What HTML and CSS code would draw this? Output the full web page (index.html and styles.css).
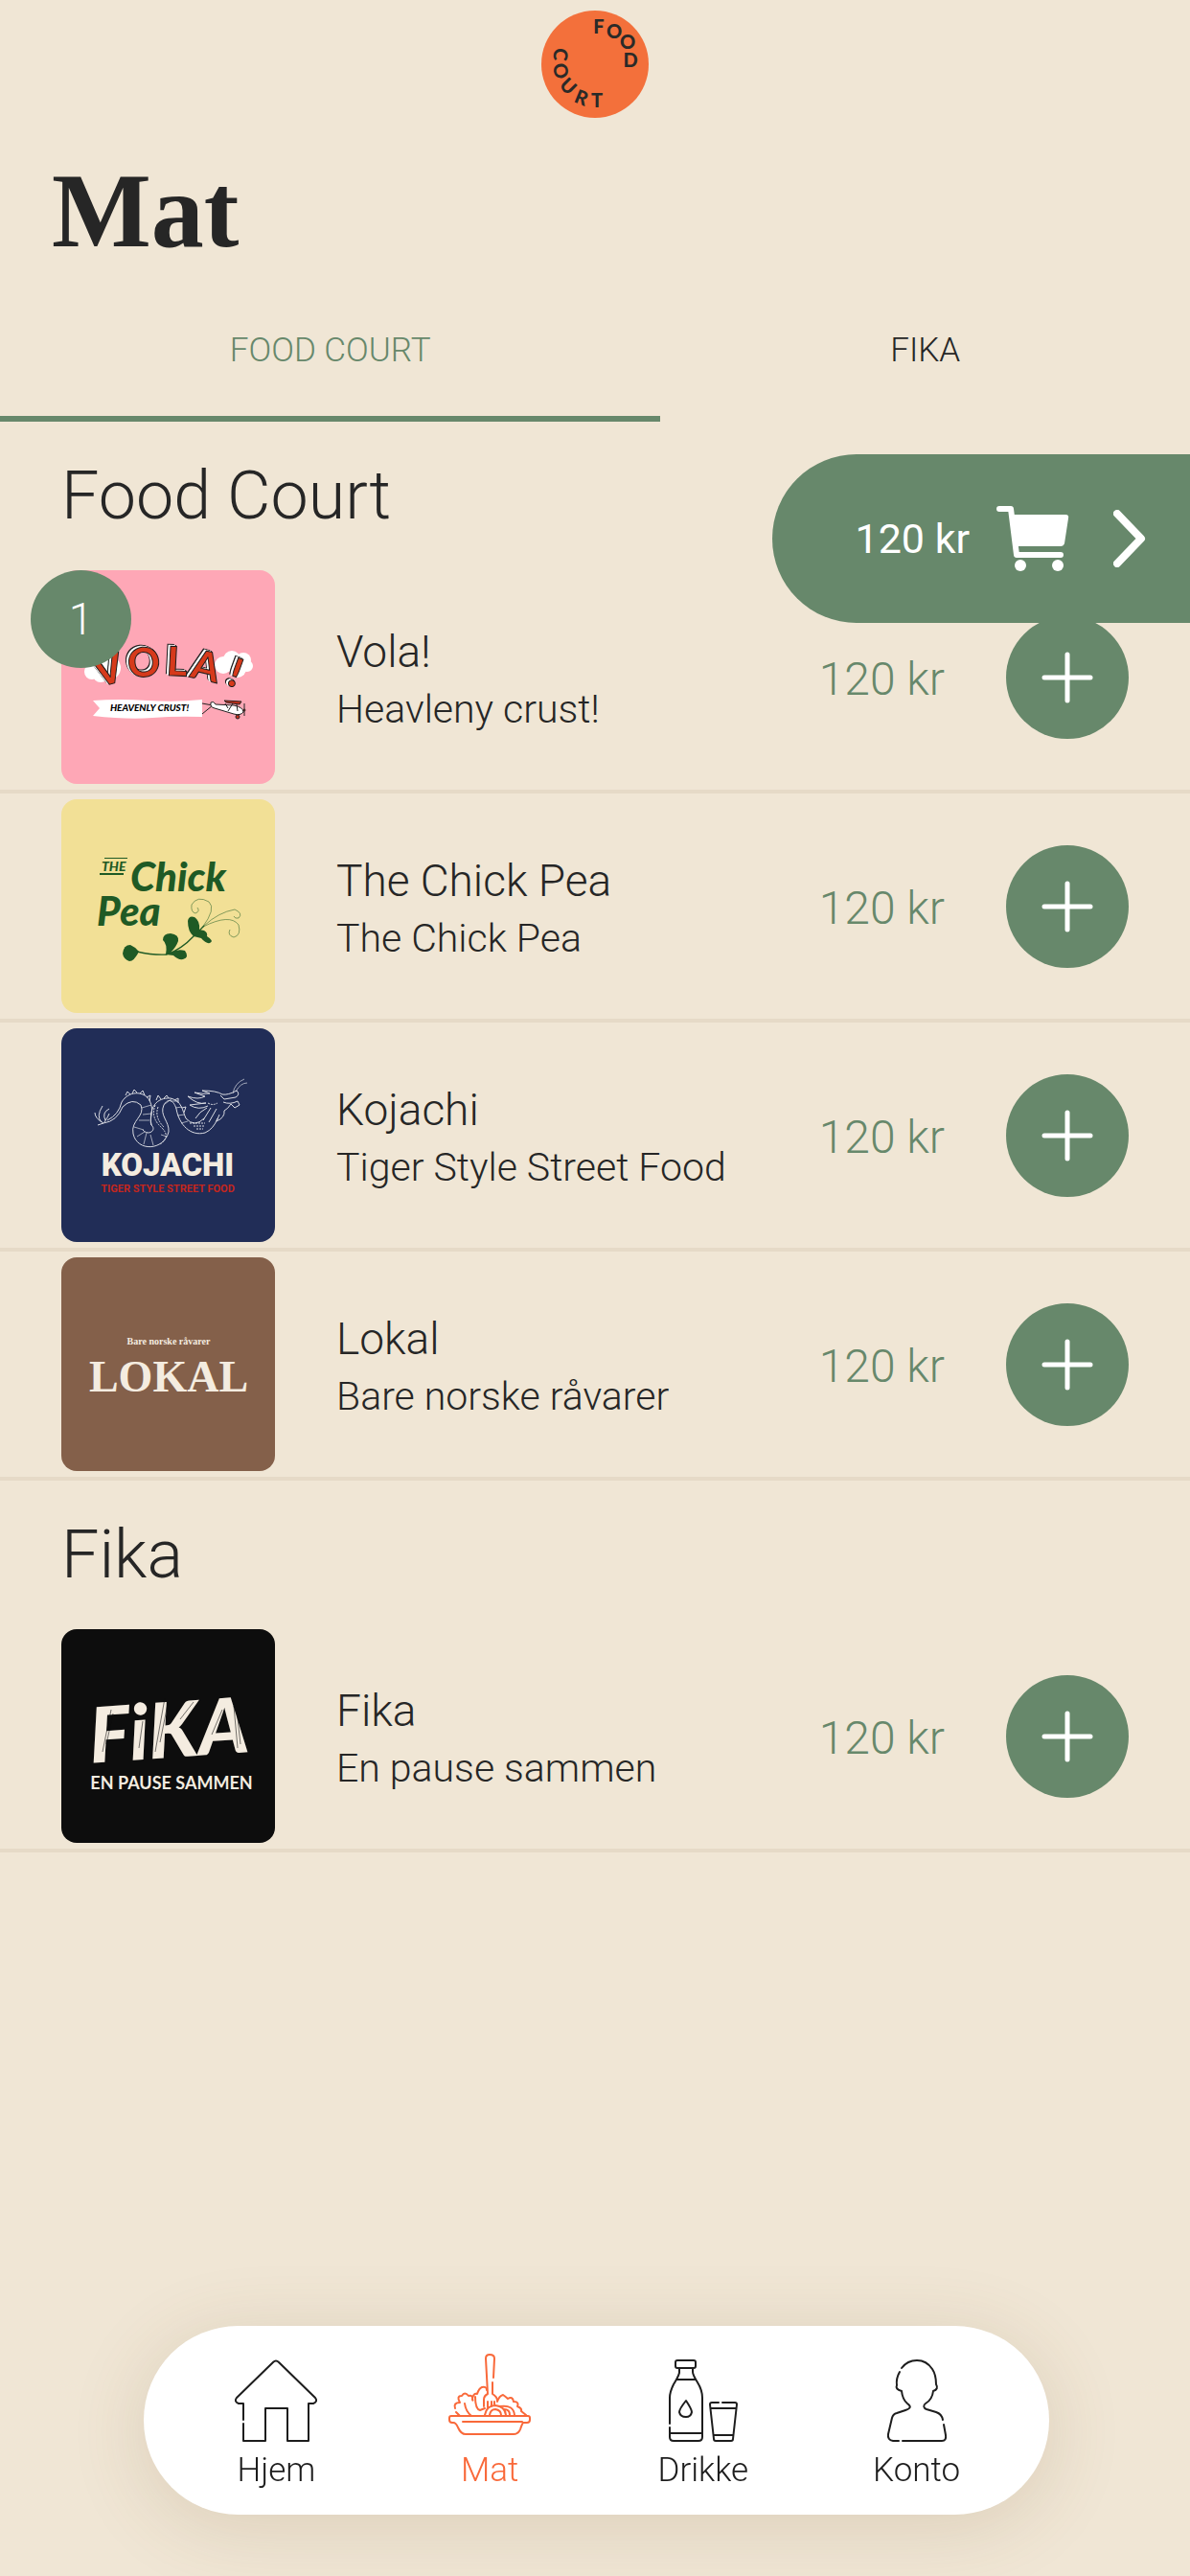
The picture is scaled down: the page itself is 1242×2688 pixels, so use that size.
FILE: index.html
```html
<!DOCTYPE html>
<html lang="no">
<head>
  <meta charset="UTF-8">
  <meta name="viewport" content="width=device-width, initial-scale=1.0">
  <title>Food Court - Mat</title>
  <link rel="stylesheet" href="styles.css">
</head>
<body>
  <header class="header">
    <svg class="logo" viewBox="0 0 112 112" role="img" aria-label="Food Court">
      <circle cx="56" cy="56" r="56" fill="#f3703b"/>
      <g class="logo-letters">
        <text x="60" y="24">F</text>
        <text x="76" y="29">O</text>
        <text x="90" y="40">O</text>
        <text x="93" y="59">D</text>
        <text transform="translate(20 46) rotate(95)" y="7">C</text>
        <text transform="translate(20 63) rotate(75)" y="7">O</text>
        <text transform="translate(28 79) rotate(45)" y="7">U</text>
        <text transform="translate(42 91) rotate(22)" y="7">R</text>
        <text x="58" y="101">T</text>
      </g>
    </svg>
  </header>

  <main>
    <h1>Mat</h1>
    <div class="tabs" role="tablist">
      <button class="tab active" role="tab" aria-selected="true">FOOD COURT</button>
      <button class="tab" role="tab" aria-selected="false">FIKA</button>
    </div>

    <!-- Food Court -->
    <section>
      <h2>Food Court</h2>
      <ul class="menu">
        <li class="menu-item">
          <div class="thumb">
            <span class="badge">1</span>
            <svg class="picture vola" viewBox="0 0 223 223">
              <g fill="#fff">
                <circle cx="32" cy="106" r="8"/><circle cx="41" cy="109" r="8"/><circle cx="50" cy="102" r="12"/>
                <circle cx="169" cy="99" r="9"/><circle cx="178" cy="93" r="9"/><circle cx="190" cy="94" r="8"/><circle cx="194" cy="100" r="6"/><circle cx="184" cy="103" r="9"/>
                <path d="M33 136 Q60 134 90 136 T147 135 V153 Q120 152 95 154 T33 152 L40 144 Z"/>
              </g>
              <g class="vola-letters">
                <text transform="translate(49 104) rotate(-15)" y="15">V</text>
                <text transform="translate(86 96) rotate(-6)" y="15">O</text>
                <text transform="translate(121 95) rotate(3)" y="15">L</text>
                <text transform="translate(151 100) rotate(13)" y="15">A</text>
                <text transform="translate(182 107) rotate(20)" y="15">!</text>
              </g>
              <text class="vola-banner" x="92" y="147">HEAVENLY CRUST!</text>
              <!-- plane -->
              <g fill="#fff" stroke="#222" stroke-width="1">
                <path d="M147 139 L158 141 L147 150" fill="none"/>
                <path d="M156 138 Q159 136 161 140 L180 141 Q190 143 190 148 Q187 152 180 150 L160 144 Q155 143 156 138 Z"/>
                <path d="M174 147 L179 139 M183 140 L184 147 M171 139 L174 144" fill="none"/>
                <path d="M170 136 L188 137 L186 140 L172 138 Z" fill="#c8301a"/>
                <path d="M191 139 V152"/>
                <circle cx="191" cy="146" r="1" fill="#c8301a"/>
                <circle cx="184" cy="153" r="2" fill="#c8301a"/>
              </g>
            </svg>
          </div>
          <div class="info">
            <h3>Vola!</h3>
            <p>Heavleny crust!</p>
          </div>
          <span class="price">120 kr</span>
          <button class="add" aria-label="Legg til Vola!">
            <svg viewBox="0 0 54 54"><path d="M27 3V51M3 27H51"/></svg>
          </button>
        </li>
        <li class="menu-item">
          <div class="thumb">
            <svg class="picture chickpea" viewBox="0 0 223 223">
              <g fill="#1f5a25">
                <text class="chick-the" x="42" y="75">THE</text>
                <text class="chick-name" x="72" y="96">Chick</text>
                <text class="chick-name" x="37" y="132">Pea</text>
                <path d="M45 61 H69 V62 H45 Z M40 77 H65 V79 H40 Z"/>
                <path d="M64 161 Q65 152 72 152 Q77 154 81 159 Q76 169 71 169 Q65 167 64 161 Z"/>
                <path d="M109 162 Q111 151 106 147 Q106 140 114 140 Q123 141 122 148 Q120 154 114 160 Q121 156 129 158 Q134 165 127 167 Q122 168 117 163 Z"/>
                <path d="M138 143 Q132 138 132 127 Q133 121 139 123 Q145 127 144 136 L149 137 Q153 139 152 143 Q160 148 155 150 Q151 151 146 145 Z"/>
              </g>
              <g fill="none" stroke="#1f5a25">
                <path d="M79 159 Q97 163 110 162 Q126 156 138 143 L149 132" stroke-width="1.3"/>
                <path d="M147 134 Q162 114 154 107 Q142 100 136 110 Q135 118 140 119 Q145 117 142 113 M149 132 Q164 118 181 115 Q190 119 185 124 Q181 125 180 122 M148 133 Q176 119 185 131 Q188 142 180 144 Q173 142 176 136" stroke-width=".8" opacity=".65"/>
              </g>
            </svg>
          </div>
          <div class="info">
            <h3>The Chick Pea</h3>
            <p>The Chick Pea</p>
          </div>
          <span class="price">120 kr</span>
          <button class="add" aria-label="Legg til The Chick Pea">
            <svg viewBox="0 0 54 54"><path d="M27 3V51M3 27H51"/></svg>
          </button>
        </li>
        <li class="menu-item">
          <div class="thumb">
            <svg class="picture kojachi" viewBox="0 0 223 223">
              <!-- dragon -->
              <g fill="none" stroke="#d9dbe2" stroke-width="1">
                <path d="M44 99 Q58 97 64 82 Q74 72 83 80 C88 92 72 96 75 110 C79 129 107 128 112 108 C113 97 102 91 107 80 C111 73 117 74 120 84 C123 101 135 113 150 109 Q159 105 163 94"/>
                <path d="M48 96 Q60 90 63 77 C70 65 86 65 92 75 C98 87 91 94 94 101 C100 106 91 113 85 106"/>
                <path d="M94 101 C91 83 99 72 114 73 C126 76 126 85 130 94 Q139 104 149 94"/>
                <path d="M98 80 Q93 93 104 103 T103 121 M101 82 Q97 93 107 103" stroke-dasharray="2 1"/>
                <path d="M76 103 L86 106 M79 113 L87 108 M86 121 L89 109 M96 122 L93 111 M84 83 L94 80 M85 90 L94 89 M81 96 L92 96 M108 79 L116 73 M114 76 L122 76 M119 83 L126 82 M121 91 L129 90 M125 99 L132 97 M104 111 L110 113" stroke-width=".7"/>
                <path d="M67 70 L69 66 L72 69 M74 68 L76 64 L79 67 M82 68 L85 65 L87 70 M89 72 L93 70 L92 76 M99 75 L101 70 L104 74 M107 73 L110 70 L112 73 M118 75 L122 73 L122 78 M126 83 L130 82 L128 88"/>
                <path d="M44 99 Q35 94 35 88 M42 98 Q36 92 43 81 M46 96 Q42 88 50 84 M44 99 L38 101 M45 98 Q49 92 50 89"/>
                <path d="M132 71 Q143 75 150 71 L139 67 Q149 69 155 68 L147 65 Q162 65 168 69 Q174 70 183 65 Q187 69 182 72 L170 74 L166 70"/>
                <path d="M132 71 Q142 80 151 78 L134 80 Q143 86 153 81 M152 83 Q144 87 140 94 M156 83 L148 96 M162 84 L154 98 M169 77 Q176 80 184 76 L186 80 L181 83 L177 79 Q174 84 170 86 Q171 93 162 97 L165 90"/>
                <path d="M179 68 Q181 57 191 53 M182 66 Q187 57 194 57" stroke-width=".7"/>
                <path d="M134 99 H150 M138 102 H149 M141 105 H148 M153 78 Q158 81 163 78" stroke-dasharray="2 1"/>
              </g>
              <text class="koj-name" x="111" y="154">KOJACHI</text>
              <text class="koj-sub" x="111" y="171">TIGER STYLE STREET FOOD</text>
            </svg>
          </div>
          <div class="info">
            <h3>Kojachi</h3>
            <p>Tiger Style Street Food</p>
          </div>
          <span class="price">120 kr</span>
          <button class="add" aria-label="Legg til Kojachi">
            <svg viewBox="0 0 54 54"><path d="M27 3V51M3 27H51"/></svg>
          </button>
        </li>
        <li class="menu-item">
          <div class="thumb">
            <svg class="picture lokal" viewBox="0 0 223 223">
              <text class="lokal-sub" x="112" y="91">Bare norske råvarer</text>
              <text class="lokal-name" x="112" y="140">LOKAL</text>
            </svg>
          </div>
          <div class="info">
            <h3>Lokal</h3>
            <p>Bare norske råvarer</p>
          </div>
          <span class="price">120 kr</span>
          <button class="add" aria-label="Legg til Lokal">
            <svg viewBox="0 0 54 54"><path d="M27 3V51M3 27H51"/></svg>
          </button>
        </li>
      </ul>
    </section>

    <!-- Fika -->
    <section>
      <h2>Fika</h2>
      <ul class="menu">
        <li class="menu-item">
          <div class="thumb">
            <svg class="picture fika" viewBox="0 0 223 223">
              <text class="fika-name" transform="translate(114 134) rotate(-4)">FiKA</text>
              <g fill="none" stroke="#0d0d0d" stroke-width=".8" opacity=".7">
                <path d="M52 84 L43 128 M54 88 L47 120 M85 96 L81 124 M108 72 L98 128 M111 78 L103 118 M124 94 L138 76 M180 80 L184 124 M183 84 L187 120 M157 110 L168 84"/>
              </g>
              <text class="fika-sub" x="115" y="167">EN PAUSE SAMMEN</text>
            </svg>
          </div>
          <div class="info">
            <h3>Fika</h3>
            <p>En pause sammen</p>
          </div>
          <span class="price">120 kr</span>
          <button class="add" aria-label="Legg til Fika">
            <svg viewBox="0 0 54 54"><path d="M27 3V51M3 27H51"/></svg>
          </button>
        </li>
      </ul>
    </section>
  </main>

  <!-- Handlekurv -->
  <button class="cart">
    <span>120 kr</span>
    <svg class="cart-icon" viewBox="0 0 76 68">
      <path d="M3 3H15L21 51H67" fill="none" stroke="#fff" stroke-width="6" stroke-linecap="round" stroke-linejoin="round"/>
      <path d="M17 9H72Q76 9 75 13L71 39Q70 42 67 42H22Z" fill="#fff"/>
      <circle cx="25" cy="62" r="6" fill="#fff"/>
      <circle cx="64" cy="62" r="6" fill="#fff"/>
    </svg>
    <svg class="cart-arrow" viewBox="0 0 34 60">
      <path d="M4 4L29 30L4 56" fill="none" stroke="#fff" stroke-width="8" stroke-linecap="round" stroke-linejoin="round"/>
    </svg>
  </button>

  <nav class="bottom-nav">
    <a href="#hjem">
      <svg viewBox="0 0 86 86">
        <path d="M9 63V46H4Q-1 44 2 40L40 3Q43 0 46 3L84 40Q87 44 82 46H77V85H55V51H32V85H9V67"/>
      </svg>
      Hjem
    </a>
    <a href="#mat" class="active">
      <svg viewBox="0 0 86 86">
        <path d="M3 65H83Q85 65 85 67V69Q85 72 82 72H78Q77 73 75 79Q73 84 68 84H18Q13 84 10 77Q8 72 5 72H4Q1 72 1 69V67Q1 65 3 65ZM15 71H77"/>
        <path d="M47 25L48 5Q48 1 43 1Q39 1 39 5L41 42Q37 44 37 48V55M46 30V42Q51 45 51 49"/>
        <path d="M41 50V56M45 50V55M48 50V53"/>
        <path d="M7 57Q5 51 12 51Q8 44 14 44Q17 39 21 44Q26 43 25 48Q26 50 25 47Q26 41 30 42Q32 36 35 35Q40 34 40 38"/>
        <path d="M8 61L12 65M17 52Q18 60 24 65M28 45Q28 58 33 59L38 57"/>
        <path d="M51 50Q53 44 57 43Q60 45 62 47Q67 44 68 50Q74 50 72 55Q77 57 76 60L81 64"/>
        <path d="M38 64Q40 54 49 54Q59 55 60 64M43 64Q44 58 49 58Q55 59 55 64M54 55Q68 53 69 64M58 58Q64 58 64 64"/>
      </svg>
      Mat
    </a>
    <a href="#drikke">
      <svg viewBox="0 0 86 86">
        <path d="M16 1H33Q35 1 35 3V7Q35 9 33 9H16Q14 9 14 7V3Q14 1 16 1Z"/>
        <path d="M18 9V14Q17 18 12 26Q8 34 8 40V67M8 71V81Q8 85 12 85H38Q42 85 42 81V40Q42 32 37 24Q32 16 32 13V9M15 21H35M8 77H42"/>
        <path d="M25 43C21 48 18 52 18 55Q19 60 25 60Q30 60 31 55C31 52 27 46 25 43Z"/>
        <path d="M59 45H52Q50 45 50 47L54 83Q54 85 56 85H72Q74 85 74 83L78 47Q78 45 76 45H63M51 51H77M54 79H74"/>
      </svg>
      Drikke
    </a>
    <a href="#konto">
      <svg viewBox="0 0 86 86">
        <path d="M27 9Q33 1 43 1Q53 1 59 10Q63 16 63 26Q66 31 60 33Q59 42 52 46C49 48 50 51 53 52L63 55Q69 57 70 63"/>
        <path d="M71 68L73 79Q74 85 69 85H28M24 85H18Q12 84 13 78L17 61Q18 57 22 56L31 53C37 51 37 49 33 46Q28 42 27 33Q20 31 22 27Q21 20 25 13"/>
      </svg>
      Konto
    </a>
  </nav>
</body>
</html>
```

FILE: styles.css
```css
* {
  box-sizing: border-box;
}
body {
  margin: 0;
  min-height: 100vh;
  padding-bottom: 320px;
  font-family: Roboto, 'Liberation Sans', sans-serif;
  font-weight: 300;
  background: #f0e6d5;
  color: #262626;
}
button {
  border: none;
  background: none;
  padding: 0;
  font: inherit;
  color: inherit;
  cursor: pointer;
}
h1, h2, h3, p, ul {
  margin: 0;
  padding: 0;
}
.header {
  display: flex;
  justify-content: center;
  padding: 11px 0;
}
.logo {
  width: 112px;
  height: 112px;
}
.logo-letters {
  font: 900 20px Lato, sans-serif;
  fill: #2a2a28;
  text-anchor: middle;
}
h1 {
  padding: 22px 54px 0;
  font-family: 'Liberation Serif', serif;
  font-weight: bold;
  font-size: 110px;
  line-height: 128px;
}

/* tabs */
.tabs {
  display: flex;
}
.tab {
  flex: 1 1 auto;
  height: 156px;
  padding-top: 12px;
  border-bottom: 6px solid transparent;
  font-size: 35px;
}
.tab.active {
  color: #67886b;
  border-color: #67886b;
}

/* menu list */
h2 {
  padding: 25px 64px 20px;
  font-size: 70px;
  font-weight: 300;
  line-height: 104px;
}
.menu {
  list-style: none;
}
.menu-item {
  display: flex;
  align-items: center;
  gap: 64px;
  padding: 6px 64px;
  border-bottom: 4px solid #e6dac7;
}
.thumb {
  position: relative;
  height: 223px;
}
.picture {
  display: block;
  width: 223px;
  height: 223px;
  border-radius: 16px;
  text-anchor: middle;
}
.badge {
  position: absolute;
  top: 0;
  left: -32px;
  width: 105px;
  height: 102px;
  border-radius: 50%;
  background: #67886b;
  color: #fff;
  font-size: 46px;
  line-height: 102px;
  text-align: center;
}
.info {
  flex: 1;
  padding-top: 6px;
}
.info h3 {
  font-size: 46px;
  font-weight: 300;
  line-height: 60px;
}
.info p {
  font-size: 41px;
  line-height: 60px;
}
.price {
  padding-top: 4px;
  color: #67886b;
  font-size: 48px;
}
.add {
  display: flex;
  align-items: center;
  justify-content: center;
  width: 128px;
  height: 128px;
  border-radius: 50%;
  background: #67886b;
}
.add svg {
  width: 54px;
  height: 54px;
  stroke: #fff;
  stroke-width: 5;
  stroke-linecap: round;
}

/* pictures */
.vola { background: #fea7b6; }
.chickpea { background: #f2e096; text-anchor: start; }
.kojachi { background: #212d57; }
.lokal { background: #84604a; }
.fika { background: #0d0d0d; }
.vola-letters {
  font: 900 42px Lato, sans-serif;
  fill: #d63a1b;
  stroke: #1d1d1d;
  stroke-width: 1px;
  filter: drop-shadow(-2px -1px 0 #fff) drop-shadow(-1px -1px 0 #1d1d1d);
}
.vola-banner {
  font: italic 900 10px Lato, sans-serif;
}
.chick-the {
  font: italic 900 14px Lato, sans-serif;
}
.chick-name {
  font: italic 900 42px Lato, sans-serif;
}
.koj-name {
  font: 900 33px Roboto, sans-serif;
  fill: #f4ece0;
}
.koj-sub {
  font: 700 11px Roboto, sans-serif;
  fill: #c4261d;
}
.lokal-name {
  font: bold 46px 'Liberation Serif', serif;
  fill: #f4ece0;
}
.lokal-sub {
  font: bold 10px 'Liberation Serif', serif;
  fill: #f4ece0;
}
.fika-name {
  font: italic 900 80px Lato, sans-serif;
  fill: #f4ece0;
}
.fika-sub {
  font: 700 18px Lato, sans-serif;
  fill: #f4ece0;
}

/* cart */
.cart {
  position: absolute;
  top: 474px;
  right: 0;
  display: flex;
  align-items: center;
  height: 176px;
  padding: 0 46px 0 86px;
  border-radius: 88px 0 0 88px;
  background: #67886b;
  color: #fff;
  font-size: 43px;
  font-weight: 400;
}
.cart-icon {
  width: 76px;
  height: 68px;
  margin: 0 46px 0 28px;
}
.cart-arrow {
  width: 34px;
  height: 60px;
}

/* bottom navigation */
.bottom-nav {
  position: fixed;
  left: 150px;
  right: 147px;
  bottom: 64px;
  display: flex;
  height: 197px;
  padding: 0 27px;
  border-radius: 99px;
  background: #fff;
  box-shadow: 0 12px 80px rgba(110, 80, 40, 0.16);
}
.bottom-nav a {
  flex: 1;
  display: flex;
  flex-direction: column;
  align-items: center;
  padding-top: 35px;
  gap: 10px;
  color: #1d1d1d;
  font-size: 35px;
  line-height: 40px;
  text-decoration: none;
}
.bottom-nav svg {
  width: 86px;
  height: 86px;
  fill: none;
  stroke: currentColor;
  stroke-width: 2;
  stroke-linecap: round;
  stroke-linejoin: round;
}
.bottom-nav .active {
  color: #f9693a;
}
.bottom-nav .active svg {
  margin: -6px 0 6px;
}
```
